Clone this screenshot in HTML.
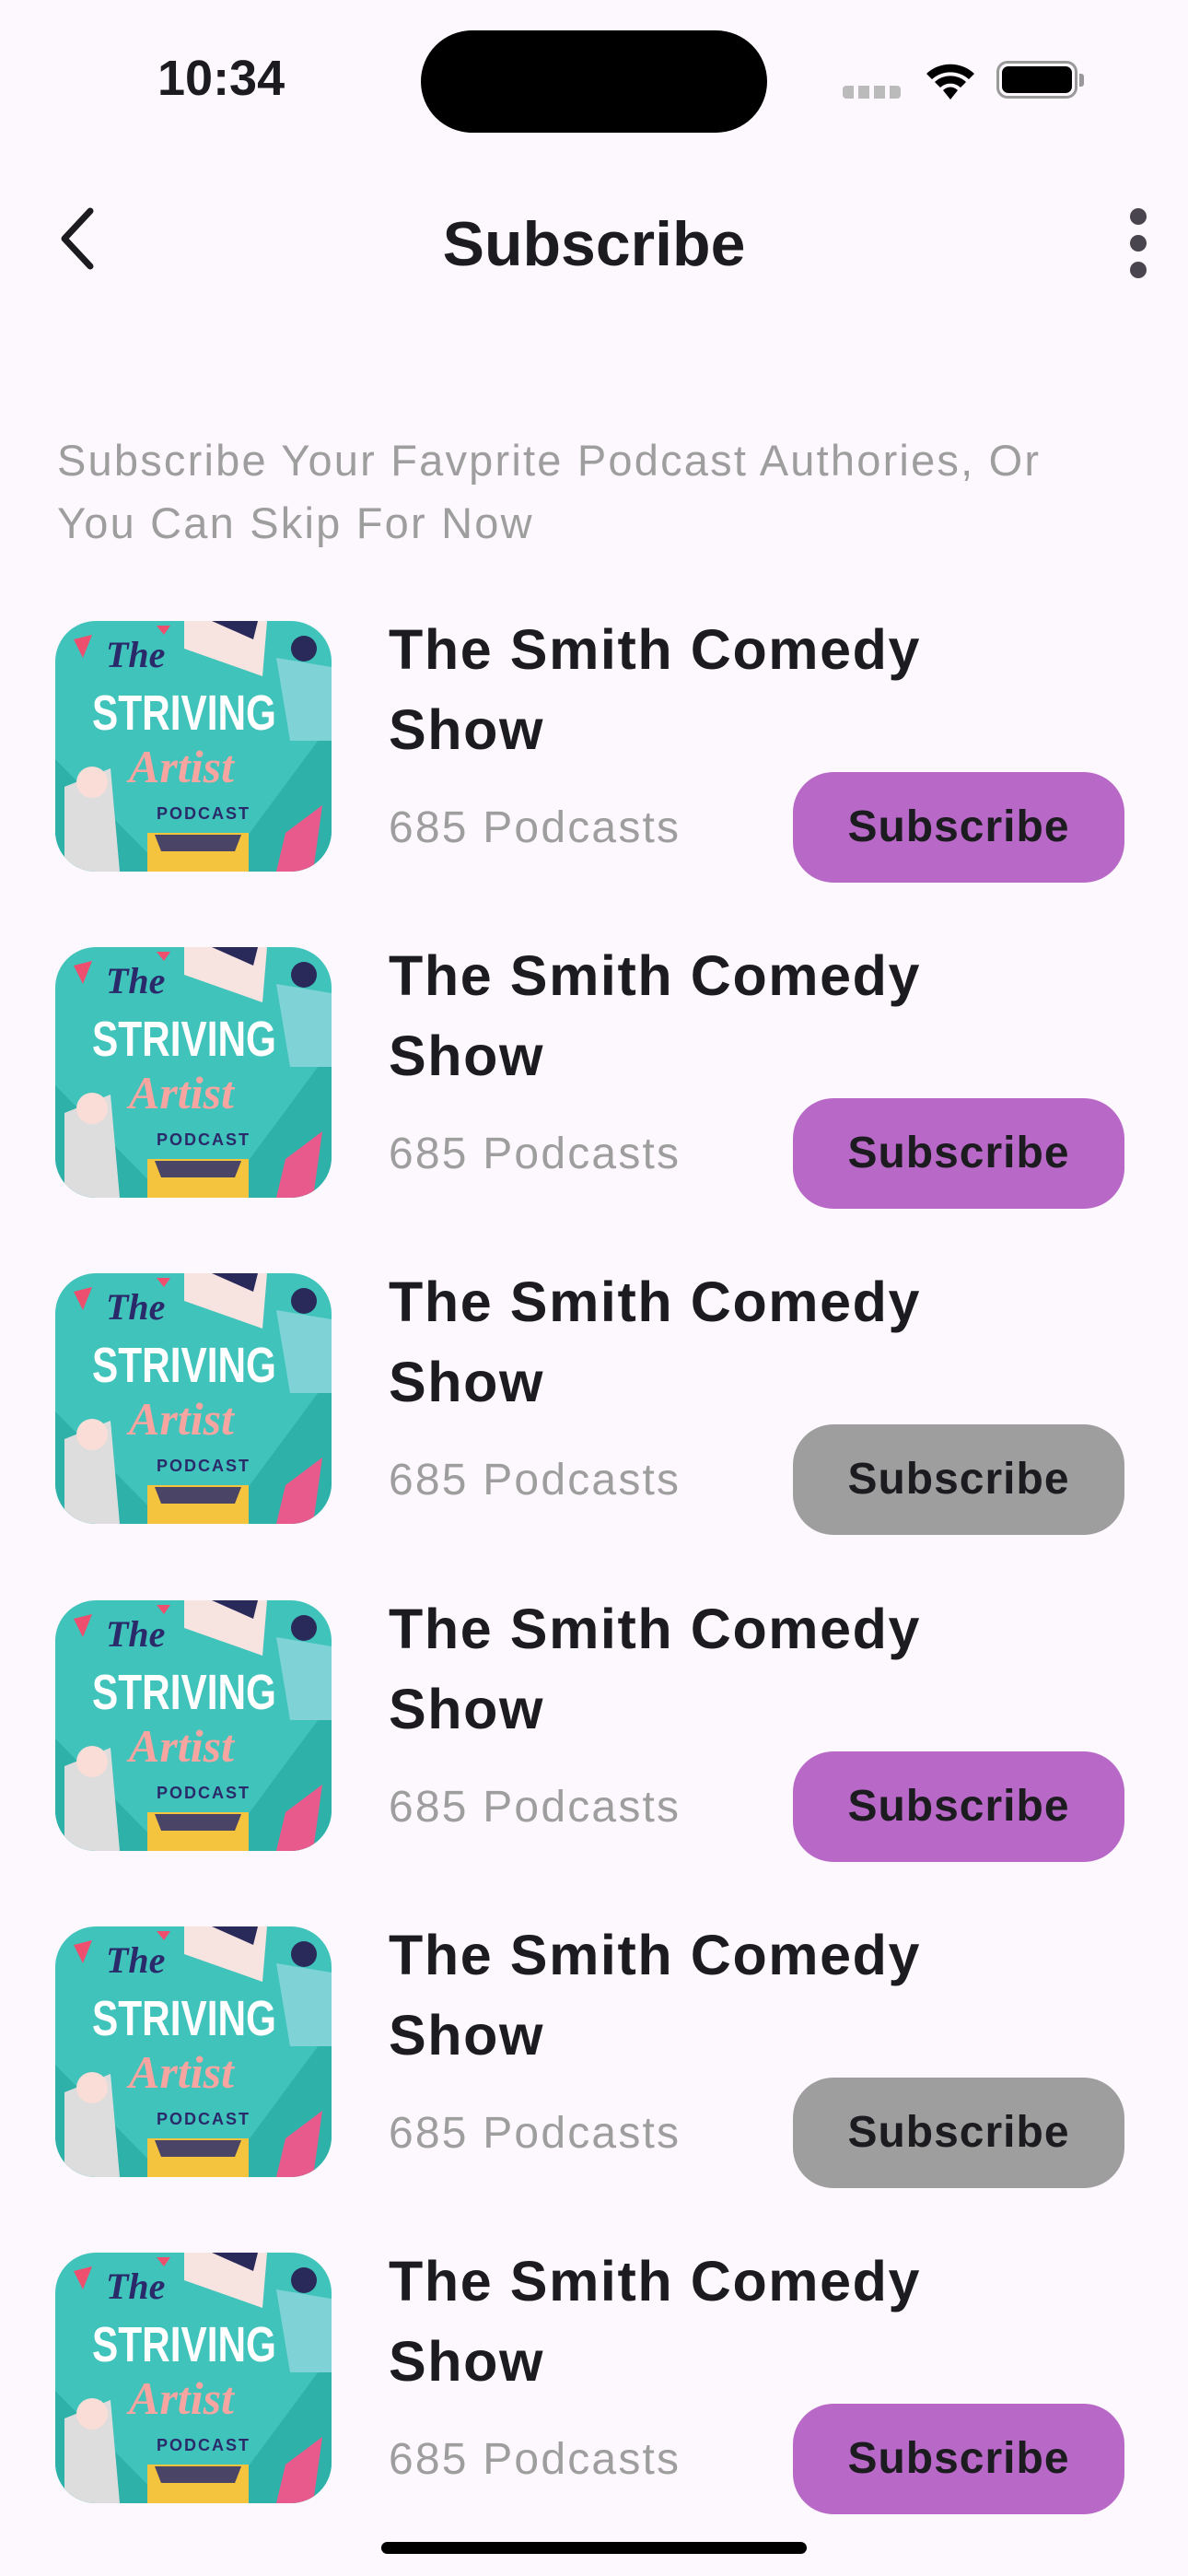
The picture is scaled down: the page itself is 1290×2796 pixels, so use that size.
<!DOCTYPE html>
<html><head><meta charset="utf-8"><style>
*{margin:0;padding:0;box-sizing:border-box}
body{width:1290px;height:2796px;background:#fdf8fd;position:relative;overflow:hidden;font-family:"Liberation Sans",sans-serif;color:#1c1b1f}
.a{position:absolute}
.row{position:absolute;left:0;width:1290px;height:300px}
.img{position:absolute;left:60px;top:0;width:300px;height:272px;border-radius:44px;overflow:hidden}
.t{position:absolute;left:422px;font-size:61px;font-weight:bold;line-height:87px;top:-12px;letter-spacing:1.6px}
.c{position:absolute;left:422px;top:197px;font-size:48px;color:#9e9e9e;letter-spacing:2.2px}
.b{position:absolute;left:861px;top:164px;width:360px;height:120px;border-radius:44px;background:#b868c6;font-size:48px;font-weight:bold;text-align:center;line-height:120px;letter-spacing:1px}
.g{background:#9e9e9e}
</style></head><body>
<div class="a" style="left:171px;top:54px;font-size:54px;font-weight:bold">10:34</div>
<div class="a" style="left:457px;top:33px;width:376px;height:111px;border-radius:56px;background:#000"></div>
<div class="a" style="left:915px;top:93px;width:63px;height:14px;background:repeating-linear-gradient(90deg,#bbb 0 12px,transparent 12px 17px);border-radius:4px"></div>
<svg class="a" style="left:1003px;top:64px" width="58" height="46" viewBox="0 0 58 46"><path d="M3 16 A38 38 0 0 1 55 16 L49 22 A30 30 0 0 0 9 22Z M12 25 A25 25 0 0 1 46 25 L40 31 A16 16 0 0 0 18 31Z M21 34 A11 11 0 0 1 37 34 L29 44Z" fill="#000"/></svg>
<div class="a" style="left:1082px;top:66px;width:88px;height:41px;border:3px solid #999;border-radius:12px"></div>
<div class="a" style="left:1088px;top:72px;width:76px;height:29px;background:#000;border-radius:7px"></div>
<div class="a" style="left:1172px;top:80px;width:5px;height:14px;background:#999;border-radius:0 3px 3px 0"></div>
<svg class="a" style="left:60px;top:224px" width="50" height="70" viewBox="0 0 50 70"><path d="M38 5 L10 35 L38 65" stroke="#1c1b1f" stroke-width="7" fill="none" stroke-linecap="round" stroke-linejoin="round"/></svg>
<div class="a" style="left:0;width:1290px;text-align:center;top:226px;font-size:68px;font-weight:bold">Subscribe</div>
<div class="a" style="left:1227px;top:226px;width:18px;height:18px;border-radius:50%;background:#49454f"></div>
<div class="a" style="left:1227px;top:255px;width:18px;height:18px;border-radius:50%;background:#49454f"></div>
<div class="a" style="left:1227px;top:284px;width:18px;height:18px;border-radius:50%;background:#49454f"></div>
<div class="a" style="left:62px;top:466px;width:1200px;font-size:47px;line-height:68px;color:#9e9e9e;letter-spacing:2.2px">Subscribe Your Favprite Podcast Authories, Or<br>You Can Skip For Now</div>

<div class="row" style="top:674px"><div class="img"><svg width="300" height="272" viewBox="0 0 300 272"><rect width="300" height="272" fill="#3fc3bb"/><path d="M0 150 L120 272 L0 272Z M300 110 L180 272 L300 272Z" fill="#2eb1a9"/><path d="M140 0 L230 0 L225 60 L140 30Z" fill="#f7e4e0"/><path d="M170 0 L220 0 L215 20Z" fill="#2a2a5a"/><path d="M240 40 L300 50 L300 130 L255 130Z" fill="#7fd3d6"/><circle cx="270" cy="30" r="14" fill="#2a2a5a"/><path d="M10 180 L60 160 L70 272 L10 272Z" fill="#ddd"/><circle cx="40" cy="175" r="17" fill="#f9ddd6"/><path d="M100 230 L210 230 L210 272 L100 272Z" fill="#f4c43e"/><path d="M108 232 L202 232 L195 250 L115 250Z" fill="#4a4466"/><path d="M20 20 L40 15 L30 40Z M110 5 L125 5 L118 15Z" fill="#ef4f6e"/><path d="M250 230 L290 200 L280 272 L240 272Z" fill="#e85a8c"/><text x="55" y="50" font-family="Liberation Serif" font-style="italic" font-weight="bold" font-size="40" fill="#2a2a6a">The</text><text x="40" y="118" font-family="Liberation Sans" font-weight="bold" font-size="54" fill="#fff" textLength="200" lengthAdjust="spacingAndGlyphs">STRIVING</text><text x="80" y="175" font-family="Liberation Serif" font-style="italic" font-weight="bold" font-size="50" fill="#f6a5a0">Artist</text><text x="110" y="215" font-family="Liberation Sans" font-weight="bold" font-size="18" fill="#2a2a6a" letter-spacing="2">PODCAST</text></svg></div><div class="t">The Smith Comedy<br>Show</div><div class="c">685 Podcasts</div><div class="b">Subscribe</div></div>

<div class="row" style="top:1028px"><div class="img"><svg width="300" height="272" viewBox="0 0 300 272"><rect width="300" height="272" fill="#3fc3bb"/><path d="M0 150 L120 272 L0 272Z M300 110 L180 272 L300 272Z" fill="#2eb1a9"/><path d="M140 0 L230 0 L225 60 L140 30Z" fill="#f7e4e0"/><path d="M170 0 L220 0 L215 20Z" fill="#2a2a5a"/><path d="M240 40 L300 50 L300 130 L255 130Z" fill="#7fd3d6"/><circle cx="270" cy="30" r="14" fill="#2a2a5a"/><path d="M10 180 L60 160 L70 272 L10 272Z" fill="#ddd"/><circle cx="40" cy="175" r="17" fill="#f9ddd6"/><path d="M100 230 L210 230 L210 272 L100 272Z" fill="#f4c43e"/><path d="M108 232 L202 232 L195 250 L115 250Z" fill="#4a4466"/><path d="M20 20 L40 15 L30 40Z M110 5 L125 5 L118 15Z" fill="#ef4f6e"/><path d="M250 230 L290 200 L280 272 L240 272Z" fill="#e85a8c"/><text x="55" y="50" font-family="Liberation Serif" font-style="italic" font-weight="bold" font-size="40" fill="#2a2a6a">The</text><text x="40" y="118" font-family="Liberation Sans" font-weight="bold" font-size="54" fill="#fff" textLength="200" lengthAdjust="spacingAndGlyphs">STRIVING</text><text x="80" y="175" font-family="Liberation Serif" font-style="italic" font-weight="bold" font-size="50" fill="#f6a5a0">Artist</text><text x="110" y="215" font-family="Liberation Sans" font-weight="bold" font-size="18" fill="#2a2a6a" letter-spacing="2">PODCAST</text></svg></div><div class="t">The Smith Comedy<br>Show</div><div class="c">685 Podcasts</div><div class="b">Subscribe</div></div>

<div class="row" style="top:1382px"><div class="img"><svg width="300" height="272" viewBox="0 0 300 272"><rect width="300" height="272" fill="#3fc3bb"/><path d="M0 150 L120 272 L0 272Z M300 110 L180 272 L300 272Z" fill="#2eb1a9"/><path d="M140 0 L230 0 L225 60 L140 30Z" fill="#f7e4e0"/><path d="M170 0 L220 0 L215 20Z" fill="#2a2a5a"/><path d="M240 40 L300 50 L300 130 L255 130Z" fill="#7fd3d6"/><circle cx="270" cy="30" r="14" fill="#2a2a5a"/><path d="M10 180 L60 160 L70 272 L10 272Z" fill="#ddd"/><circle cx="40" cy="175" r="17" fill="#f9ddd6"/><path d="M100 230 L210 230 L210 272 L100 272Z" fill="#f4c43e"/><path d="M108 232 L202 232 L195 250 L115 250Z" fill="#4a4466"/><path d="M20 20 L40 15 L30 40Z M110 5 L125 5 L118 15Z" fill="#ef4f6e"/><path d="M250 230 L290 200 L280 272 L240 272Z" fill="#e85a8c"/><text x="55" y="50" font-family="Liberation Serif" font-style="italic" font-weight="bold" font-size="40" fill="#2a2a6a">The</text><text x="40" y="118" font-family="Liberation Sans" font-weight="bold" font-size="54" fill="#fff" textLength="200" lengthAdjust="spacingAndGlyphs">STRIVING</text><text x="80" y="175" font-family="Liberation Serif" font-style="italic" font-weight="bold" font-size="50" fill="#f6a5a0">Artist</text><text x="110" y="215" font-family="Liberation Sans" font-weight="bold" font-size="18" fill="#2a2a6a" letter-spacing="2">PODCAST</text></svg></div><div class="t">The Smith Comedy<br>Show</div><div class="c">685 Podcasts</div><div class="b g">Subscribe</div></div>

<div class="row" style="top:1737px"><div class="img"><svg width="300" height="272" viewBox="0 0 300 272"><rect width="300" height="272" fill="#3fc3bb"/><path d="M0 150 L120 272 L0 272Z M300 110 L180 272 L300 272Z" fill="#2eb1a9"/><path d="M140 0 L230 0 L225 60 L140 30Z" fill="#f7e4e0"/><path d="M170 0 L220 0 L215 20Z" fill="#2a2a5a"/><path d="M240 40 L300 50 L300 130 L255 130Z" fill="#7fd3d6"/><circle cx="270" cy="30" r="14" fill="#2a2a5a"/><path d="M10 180 L60 160 L70 272 L10 272Z" fill="#ddd"/><circle cx="40" cy="175" r="17" fill="#f9ddd6"/><path d="M100 230 L210 230 L210 272 L100 272Z" fill="#f4c43e"/><path d="M108 232 L202 232 L195 250 L115 250Z" fill="#4a4466"/><path d="M20 20 L40 15 L30 40Z M110 5 L125 5 L118 15Z" fill="#ef4f6e"/><path d="M250 230 L290 200 L280 272 L240 272Z" fill="#e85a8c"/><text x="55" y="50" font-family="Liberation Serif" font-style="italic" font-weight="bold" font-size="40" fill="#2a2a6a">The</text><text x="40" y="118" font-family="Liberation Sans" font-weight="bold" font-size="54" fill="#fff" textLength="200" lengthAdjust="spacingAndGlyphs">STRIVING</text><text x="80" y="175" font-family="Liberation Serif" font-style="italic" font-weight="bold" font-size="50" fill="#f6a5a0">Artist</text><text x="110" y="215" font-family="Liberation Sans" font-weight="bold" font-size="18" fill="#2a2a6a" letter-spacing="2">PODCAST</text></svg></div><div class="t">The Smith Comedy<br>Show</div><div class="c">685 Podcasts</div><div class="b">Subscribe</div></div>

<div class="row" style="top:2091px"><div class="img"><svg width="300" height="272" viewBox="0 0 300 272"><rect width="300" height="272" fill="#3fc3bb"/><path d="M0 150 L120 272 L0 272Z M300 110 L180 272 L300 272Z" fill="#2eb1a9"/><path d="M140 0 L230 0 L225 60 L140 30Z" fill="#f7e4e0"/><path d="M170 0 L220 0 L215 20Z" fill="#2a2a5a"/><path d="M240 40 L300 50 L300 130 L255 130Z" fill="#7fd3d6"/><circle cx="270" cy="30" r="14" fill="#2a2a5a"/><path d="M10 180 L60 160 L70 272 L10 272Z" fill="#ddd"/><circle cx="40" cy="175" r="17" fill="#f9ddd6"/><path d="M100 230 L210 230 L210 272 L100 272Z" fill="#f4c43e"/><path d="M108 232 L202 232 L195 250 L115 250Z" fill="#4a4466"/><path d="M20 20 L40 15 L30 40Z M110 5 L125 5 L118 15Z" fill="#ef4f6e"/><path d="M250 230 L290 200 L280 272 L240 272Z" fill="#e85a8c"/><text x="55" y="50" font-family="Liberation Serif" font-style="italic" font-weight="bold" font-size="40" fill="#2a2a6a">The</text><text x="40" y="118" font-family="Liberation Sans" font-weight="bold" font-size="54" fill="#fff" textLength="200" lengthAdjust="spacingAndGlyphs">STRIVING</text><text x="80" y="175" font-family="Liberation Serif" font-style="italic" font-weight="bold" font-size="50" fill="#f6a5a0">Artist</text><text x="110" y="215" font-family="Liberation Sans" font-weight="bold" font-size="18" fill="#2a2a6a" letter-spacing="2">PODCAST</text></svg></div><div class="t">The Smith Comedy<br>Show</div><div class="c">685 Podcasts</div><div class="b g">Subscribe</div></div>

<div class="row" style="top:2445px"><div class="img"><svg width="300" height="272" viewBox="0 0 300 272"><rect width="300" height="272" fill="#3fc3bb"/><path d="M0 150 L120 272 L0 272Z M300 110 L180 272 L300 272Z" fill="#2eb1a9"/><path d="M140 0 L230 0 L225 60 L140 30Z" fill="#f7e4e0"/><path d="M170 0 L220 0 L215 20Z" fill="#2a2a5a"/><path d="M240 40 L300 50 L300 130 L255 130Z" fill="#7fd3d6"/><circle cx="270" cy="30" r="14" fill="#2a2a5a"/><path d="M10 180 L60 160 L70 272 L10 272Z" fill="#ddd"/><circle cx="40" cy="175" r="17" fill="#f9ddd6"/><path d="M100 230 L210 230 L210 272 L100 272Z" fill="#f4c43e"/><path d="M108 232 L202 232 L195 250 L115 250Z" fill="#4a4466"/><path d="M20 20 L40 15 L30 40Z M110 5 L125 5 L118 15Z" fill="#ef4f6e"/><path d="M250 230 L290 200 L280 272 L240 272Z" fill="#e85a8c"/><text x="55" y="50" font-family="Liberation Serif" font-style="italic" font-weight="bold" font-size="40" fill="#2a2a6a">The</text><text x="40" y="118" font-family="Liberation Sans" font-weight="bold" font-size="54" fill="#fff" textLength="200" lengthAdjust="spacingAndGlyphs">STRIVING</text><text x="80" y="175" font-family="Liberation Serif" font-style="italic" font-weight="bold" font-size="50" fill="#f6a5a0">Artist</text><text x="110" y="215" font-family="Liberation Sans" font-weight="bold" font-size="18" fill="#2a2a6a" letter-spacing="2">PODCAST</text></svg></div><div class="t">The Smith Comedy<br>Show</div><div class="c">685 Podcasts</div><div class="b">Subscribe</div></div>

<div class="a" style="left:414px;top:2759px;width:462px;height:13px;border-radius:7px;background:#000"></div>
</body></html>
